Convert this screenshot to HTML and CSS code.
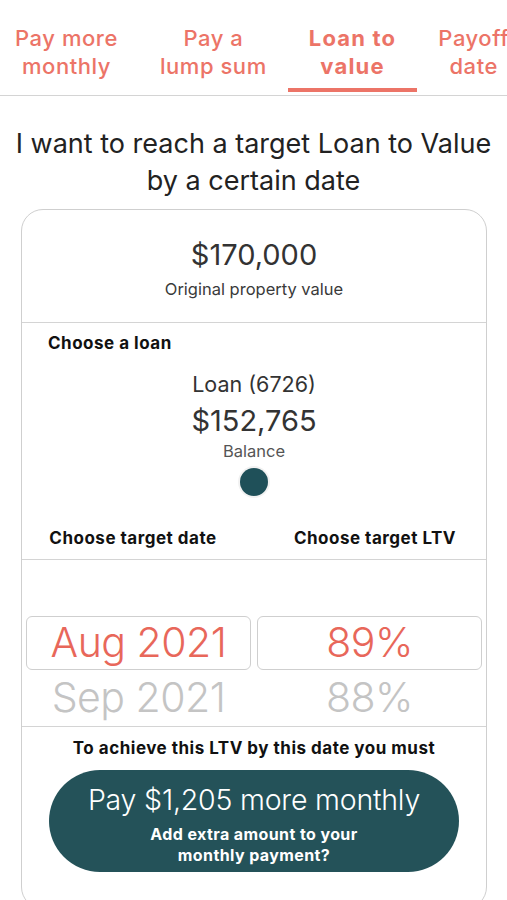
FILE: index.html
```html
<!DOCTYPE html>
<html>
<head>
<meta charset="utf-8">
<link rel="stylesheet" href="styles.css">
</head>
<body>
<nav class="tabs">
  <div class="tab">Pay more<br>monthly</div>
  <div class="tab">Pay a<br>lump sum</div>
  <div class="tab active">Loan to<br>value</div>
  <div class="tab">Payoff<br>date</div>
</nav>
<h1 class="title">I want to reach a target Loan to Value by a certain date</h1>
<section class="card">
  <div class="property">
    <div class="big">$170,000</div>
    <div class="sub">Original property value</div>
  </div>
  <div class="loan">
    <div class="label">Choose a loan</div>
    <div class="loan-name">Loan (6726)</div>
    <div class="big2">$152,765</div>
    <div class="sub gray">Balance</div>
    <div class="dot"></div>
    <div class="targets">
      <div class="label center">Choose target date</div>
      <div class="label center">Choose target LTV</div>
    </div>
  </div>
  <div class="picker">
    <div class="prow selected">
      <div class="pcell">Aug 2021</div>
      <div class="pcell">89%</div>
    </div>
    <div class="prow faded">
      <div class="pcell">Sep 2021</div>
      <div class="pcell">88%</div>
    </div>
  </div>
  <div class="result">
    <div class="label center">To achieve this LTV by this date you must</div>
    <button class="cta">
      <span class="cta-main">Pay $1,205 more monthly</span>
      <span class="cta-sub">Add extra amount to your<br>monthly payment?</span>
    </button>
  </div>
</section>
</body>
</html>
```
FILE: styles.css
```css
* { box-sizing: border-box; }
html, body { margin: 0; padding: 0; background: #fff; }
body {
  font-family: Inter, "Noto Sans", "Liberation Sans", sans-serif;
  color: #2b2b2b;
  width: 507px;
  overflow: hidden;
}
.tabs {
  display: flex;
  margin-left: -6px;
  padding-top: 24px;
  border-bottom: 1.5px solid #d4d4d4;
  white-space: nowrap;
}
.tab {
  flex: none;
  padding: 0 21px 8px;
  text-align: center;
  font-size: 22px;
  letter-spacing: 0.55px;
  line-height: 28px;
  color: #ec7467;
  font-weight: 500;
  border-bottom: 4px solid transparent;
  margin-bottom: 3px;
}
.tab.active {
  font-weight: 700;
  letter-spacing: 1.2px;
  border-bottom-color: #ec7467;
}
.title {
  margin: 29px 0 0;
  font-size: 27px;
  line-height: 37px;
  font-weight: 400;
  text-align: center;
  color: #222;
  letter-spacing: 0;
  padding: 0 8px;
}
.card {
  margin: 10px 20px 0 21px;
  border: 1.5px solid #cfcfcf;
  border-radius: 22px;
  height: 700px;
}
.property {
  height: 113px;
  border-bottom: 1.5px solid #d4d4d4;
  text-align: center;
  padding-top: 27px;
}
.big { font-size: 29px; line-height: 36px; color: #333; }
.sub { font-size: 16.5px; line-height: 22px; color: #3a3a3a; margin-top: 5px; }
.gray { color: #555; }
.loan {
  text-align: center;
  border-bottom: 1.5px solid #d4d4d4;
  height: 237px;
  padding-top: 10px;
}
.label {
  font-size: 17px;
  font-weight: 700;
  letter-spacing: 0.5px;
  color: #111;
  line-height: 20px;
  text-align: left;
  padding-left: 26px;
}
.label.center { text-align: center; padding-left: 0; }
.loan-name { font-size: 21.5px; line-height: 28px; margin-top: 17px; color: #333; }
.big2 { font-size: 29px; line-height: 38px; color: #333; margin-top: 4px; }
.loan .sub { margin-top: 0; line-height: 22px; }
.dot {
  width: 28px; height: 28px;
  margin: 6px auto 0;
  border-radius: 50%;
  background: #1f5059;
  box-shadow: 0 0 0 2px #f2f2f2;
}
.targets {
  display: grid;
  grid-template-columns: 1fr 1fr;
  column-gap: 20px;
  margin-top: 32px;
}
.picker {
  height: 167px;
  border-bottom: 1.5px solid #d4d4d4;
  padding: 56px 4px 0;
}
.prow {
  display: grid;
  grid-template-columns: 1fr 1fr;
  gap: 6px;
}
.pcell {
  text-align: center;
  font-size: 41px;
  font-weight: 300;
  letter-spacing: -0.5px;
  line-height: 51px;
}
.selected .pcell {
  border: 1.5px solid #cfcfcf;
  border-radius: 6px;
  color: #e8675a;
  height: 54px;
}
.faded .pcell { color: #c4c4c4; line-height: 54px; }
.result {
  text-align: center;
  padding-top: 11px;
}
.cta {
  display: flex;
  flex-direction: column;
  align-items: center;
  margin: 12px auto 0;
  width: 410px;
  height: 102px;
  border: none;
  border-radius: 51px;
  background: #245259;
  color: #fff;
  font-family: inherit;
  padding: 12px 0 0;
}
.cta-main {
  font-size: 28.5px;
  font-weight: 300;
  line-height: 36px;
  letter-spacing: -0.2px;
}
.cta-sub {
  font-size: 16px;
  font-weight: 700;
  letter-spacing: 0.4px;
  line-height: 21px;
  margin-top: 6px;
}
```
